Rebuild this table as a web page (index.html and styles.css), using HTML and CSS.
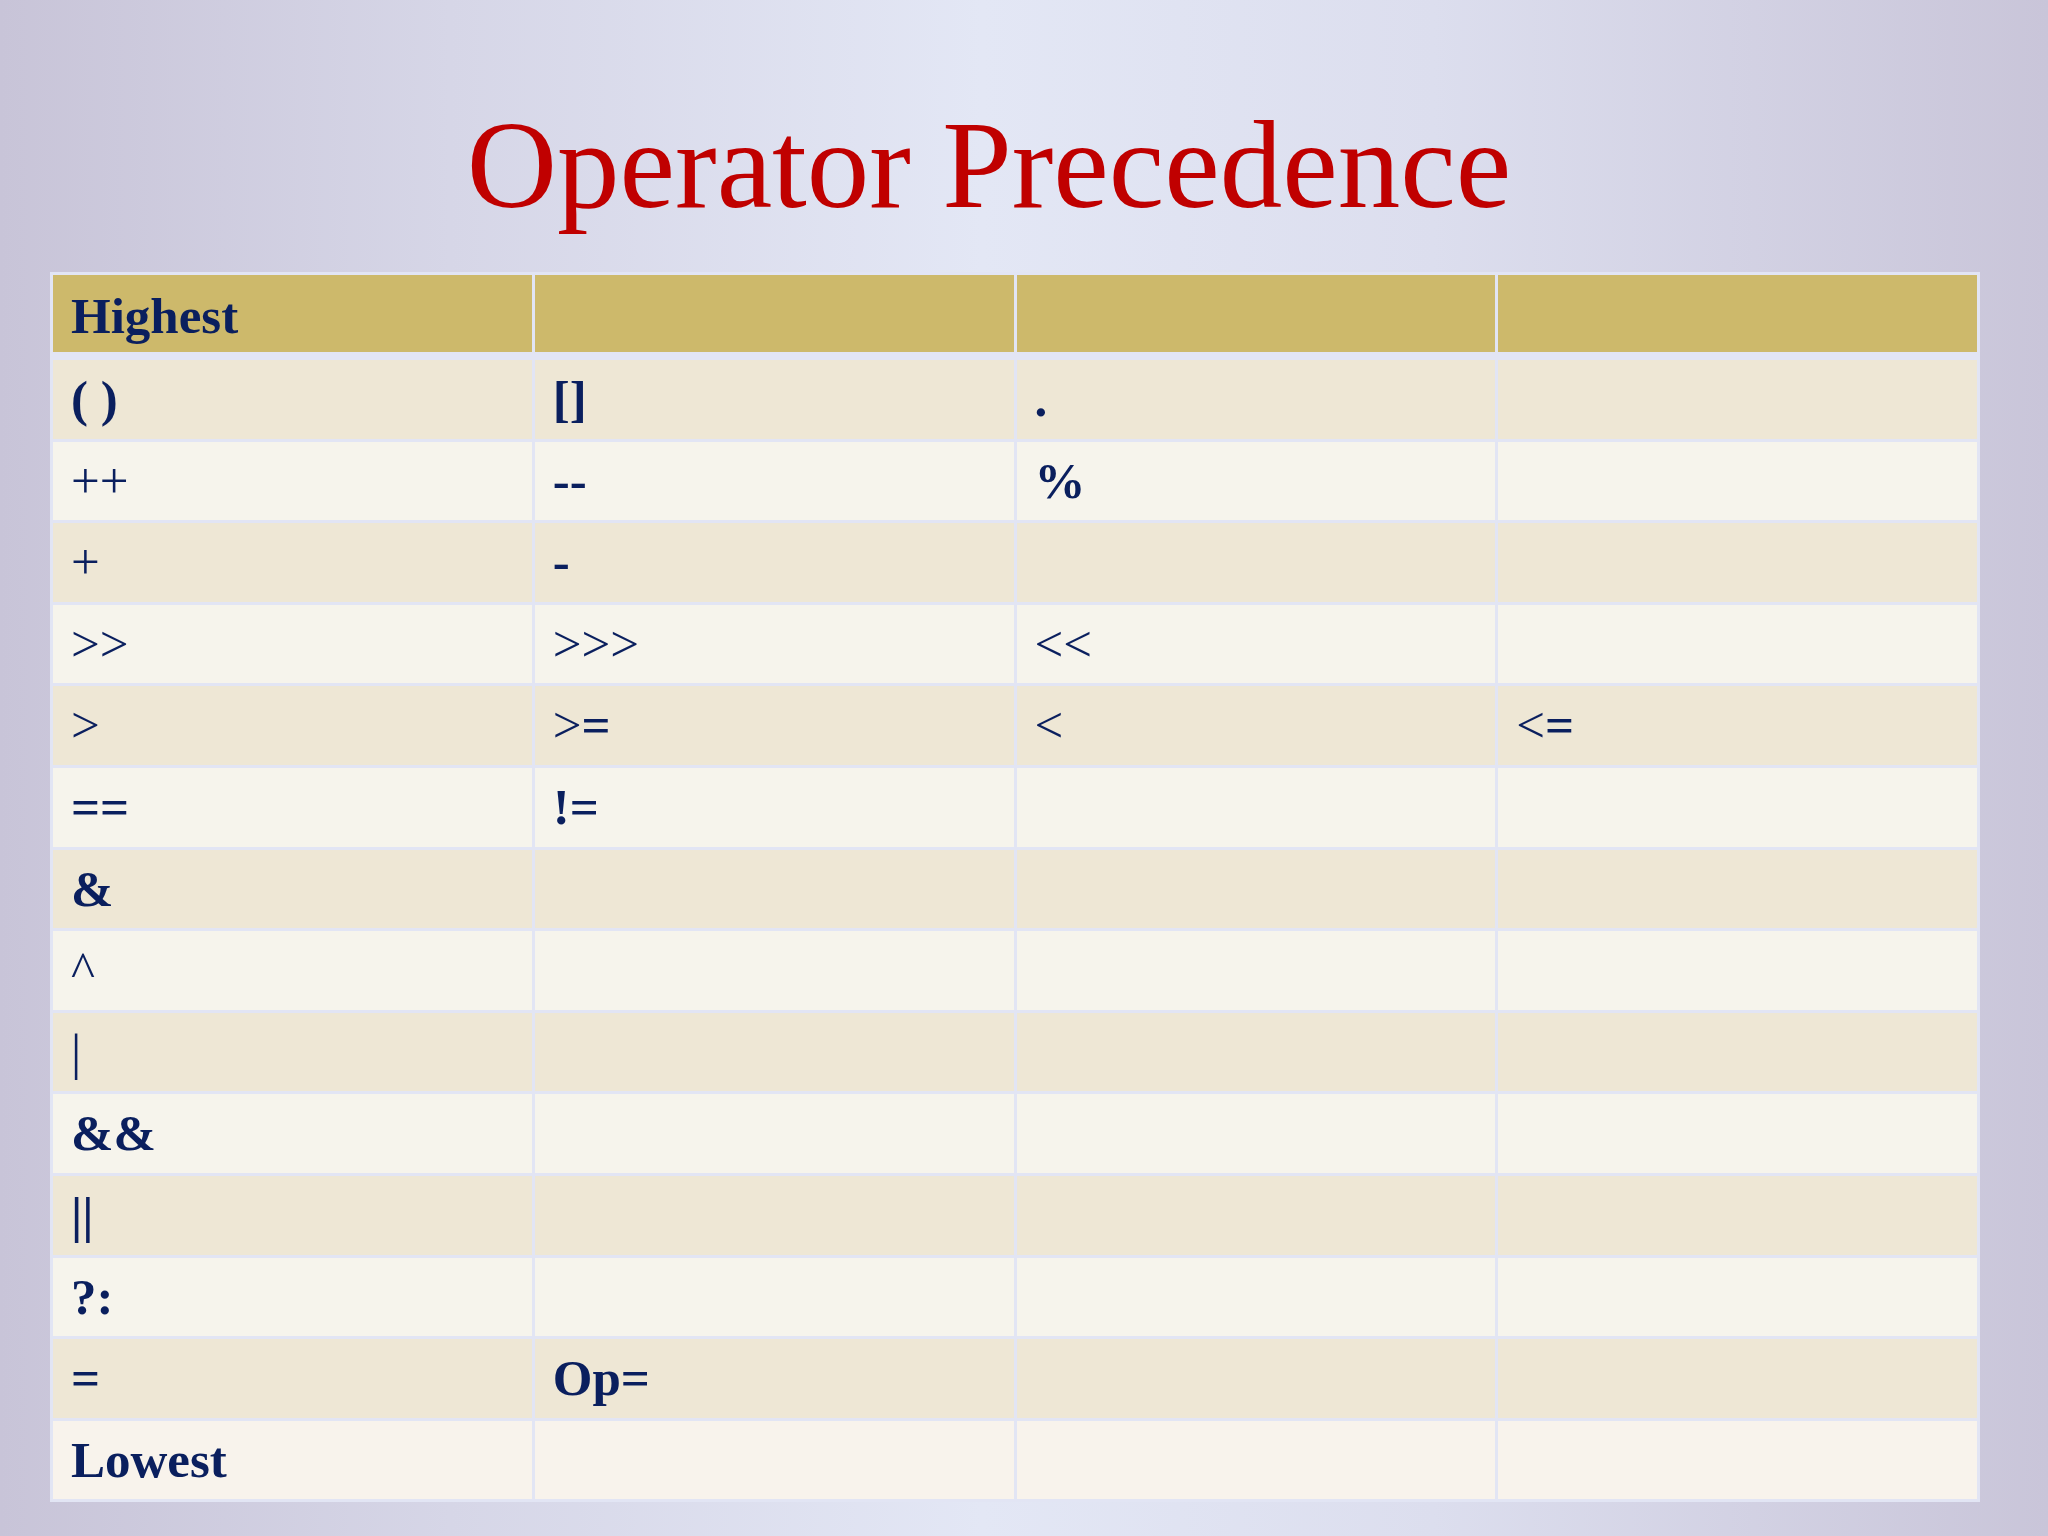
FILE: index.html
```html
<!DOCTYPE html>
<html lang="en">
<head>
<meta charset="utf-8">
<title>Operator Precedence</title>
<link rel="stylesheet" href="styles.css">
</head>
<body>
<div class="slide">
  <h1 class="title">Operator Precedence</h1>
  <table class="prec">
    <thead>
      <tr class="head">
        <th class="b">Highest</th><th></th><th></th><th></th>
      </tr>
    </thead>
    <tbody>
      <tr class="odd"><td class="b">( )</td><td class="b">[]</td><td class="b">.</td><td></td></tr>
      <tr class="even"><td>++</td><td class="b">--</td><td class="b">%</td><td></td></tr>
      <tr class="odd"><td>+</td><td class="b">-</td><td></td><td></td></tr>
      <tr class="even"><td>&gt;&gt;</td><td>&gt;&gt;&gt;</td><td>&lt;&lt;</td><td></td></tr>
      <tr class="odd"><td>&gt;</td><td>&gt;<span class="b">=</span></td><td>&lt;</td><td>&lt;<span class="b">=</span></td></tr>
      <tr class="even"><td class="b">==</td><td class="b">!=</td><td></td><td></td></tr>
      <tr class="odd"><td class="b">&amp;</td><td></td><td></td><td></td></tr>
      <tr class="even"><td>^</td><td></td><td></td><td></td></tr>
      <tr class="odd"><td>|</td><td></td><td></td><td></td></tr>
      <tr class="even"><td class="b">&amp;&amp;</td><td></td><td></td><td></td></tr>
      <tr class="odd"><td class="b">||</td><td></td><td></td><td></td></tr>
      <tr class="even"><td class="b">?:</td><td></td><td></td><td></td></tr>
      <tr class="odd"><td class="b">=</td><td class="b">Op=</td><td></td><td></td></tr>
      <tr class="even last"><td class="b">Lowest</td><td></td><td></td><td></td></tr>
    </tbody>
  </table>
</div>
</body>
</html>
```
FILE: styles.css
```css
html, body {
  margin: 0;
  padding: 0;
}
body {
  width: 2048px;
  height: 1536px;
  overflow: hidden;
  font-family: "Liberation Serif", "Times New Roman", serif;
  background: linear-gradient(90deg, #c8c4d8 0%, #d6d6e7 22%, #e3e7f5 48%, #dcdeee 70%, #c9c5d9 100%);
}
.slide {
  width: 2048px;
  height: 1536px;
}
.title {
  margin: 0;
  padding: 94px 70px 0 0;
  height: 178px;
  text-align: center;
  font-weight: normal;
  font-size: 125px;
  line-height: normal;
  color: #c00000;
}
.prec {
  margin-left: 50px;
  width: 1930px;
  table-layout: fixed;
  border-collapse: separate;
  border-spacing: 3px;
  background: #e2e5f4;
  color: #0a1f5e;
  font-size: 51px;
}
.prec th, .prec td {
  padding: 10px 0 0 18px;
  vertical-align: top;
  text-align: left;
  font-weight: normal;
  line-height: normal;
  white-space: nowrap;
}
.prec .head {
  height: 82px;
}
.prec .head th {
  background: #cdb96b;
  border-bottom: 5px solid #e2e5f4;
  padding-top: 12px;
}
.prec tbody tr {
  height: 78.6px;
}
.prec .odd td {
  background: #eee7d5;
}
.prec .even td {
  background: #f6f4ec;
}
.prec .last td {
  background: #f8f3ec;
}
.prec .b {
  font-weight: bold;
}
```
